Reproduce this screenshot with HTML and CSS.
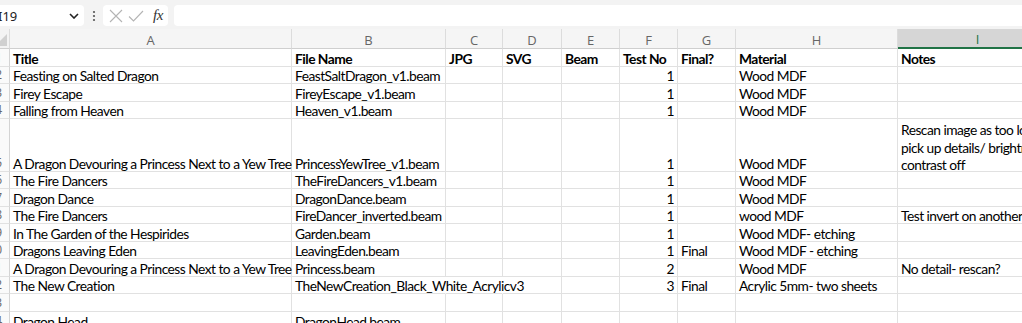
FILE: index.html
```html
<!DOCTYPE html>
<html>
<head>
<meta charset="utf-8">
<link rel="stylesheet" href="styles.css">
</head>
<body>
<div class="toolbar">
  <div class="namebox">
    <span class="ref">I19</span>
    <svg class="chev" width="10" height="6" viewBox="0 0 10 6"><path d="M1 1 L5 5 L9 1" fill="none" stroke="#222" stroke-width="1.6"/></svg>
  </div>
  <div class="dots">
    <svg width="4" height="12" viewBox="0 0 4 12"><circle cx="2" cy="2" r="1.1" fill="#555"/><circle cx="2" cy="6" r="1.1" fill="#555"/><circle cx="2" cy="10" r="1.1" fill="#555"/></svg>
  </div>
  <div class="fbtns">
    <svg width="14" height="14" viewBox="0 0 14 14"><path d="M1 1 L13 13 M13 1 L1 13" stroke="#b4b4b4" stroke-width="1.1" fill="none"/></svg>
    <svg width="16" height="14" viewBox="0 0 16 14"><path d="M1 7.5 L5.5 12 L15 2" stroke="#b4b4b4" stroke-width="1.1" fill="none"/></svg>
    <span class="fx">fx</span>
  </div>
  <div class="formula"></div>
</div>
<div class="sheet">
  <div class="grid">
    <div class="hd corner"><span class="tri"></span></div>
    <div class="hd">A</div><div class="hd">B</div><div class="hd">C</div><div class="hd">D</div><div class="hd">E</div><div class="hd">F</div><div class="hd">G</div><div class="hd">H</div><div class="hd sel">I</div>

    <div class="rn">1</div>
    <div class="c b">Title</div><div class="c b">File Name</div><div class="c b">JPG</div><div class="c b">SVG</div><div class="c b">Beam</div><div class="c b">Test No</div><div class="c b">Final?</div><div class="c b">Material</div><div class="c b">Notes</div>

    <div class="rn">2</div>
    <div class="c">Feasting on Salted Dragon</div><div class="c">FeastSaltDragon_v1.beam</div><div class="c"></div><div class="c"></div><div class="c"></div><div class="c n">1</div><div class="c"></div><div class="c">Wood MDF</div><div class="c"></div>

    <div class="rn">3</div>
    <div class="c">Firey Escape</div><div class="c">FireyEscape_v1.beam</div><div class="c"></div><div class="c"></div><div class="c"></div><div class="c n">1</div><div class="c"></div><div class="c">Wood MDF</div><div class="c"></div>

    <div class="rn">4</div>
    <div class="c">Falling from Heaven</div><div class="c">Heaven_v1.beam</div><div class="c"></div><div class="c"></div><div class="c"></div><div class="c n">1</div><div class="c"></div><div class="c">Wood MDF</div><div class="c"></div>

    <div class="rn">5</div>
    <div class="c">A Dragon Devouring a Princess Next to a Yew Tree</div><div class="c">PrincessYewTree_v1.beam</div><div class="c"></div><div class="c"></div><div class="c"></div><div class="c n">1</div><div class="c"></div><div class="c">Wood MDF</div><div class="c wrap">Rescan image as too low res to<br>pick up details/ brightness and<br>contrast off</div>

    <div class="rn">6</div>
    <div class="c">The Fire Dancers</div><div class="c">TheFireDancers_v1.beam</div><div class="c"></div><div class="c"></div><div class="c"></div><div class="c n">1</div><div class="c"></div><div class="c">Wood MDF</div><div class="c"></div>

    <div class="rn">7</div>
    <div class="c">Dragon Dance</div><div class="c">DragonDance.beam</div><div class="c"></div><div class="c"></div><div class="c"></div><div class="c n">1</div><div class="c"></div><div class="c">Wood MDF</div><div class="c"></div>

    <div class="rn">8</div>
    <div class="c">The Fire Dancers</div><div class="c">FireDancer_inverted.beam</div><div class="c"></div><div class="c"></div><div class="c"></div><div class="c n">1</div><div class="c"></div><div class="c">wood MDF</div><div class="c">Test invert on another image</div>

    <div class="rn">9</div>
    <div class="c">In The Garden of the Hespirides</div><div class="c">Garden.beam</div><div class="c"></div><div class="c"></div><div class="c"></div><div class="c n">1</div><div class="c"></div><div class="c">Wood MDF- etching</div><div class="c"></div>

    <div class="rn">10</div>
    <div class="c">Dragons Leaving Eden</div><div class="c">LeavingEden.beam</div><div class="c"></div><div class="c"></div><div class="c"></div><div class="c n">1</div><div class="c">Final</div><div class="c">Wood MDF - etching</div><div class="c"></div>

    <div class="rn">11</div>
    <div class="c">A Dragon Devouring a Princess Next to a Yew Tree</div><div class="c">Princess.beam</div><div class="c"></div><div class="c"></div><div class="c"></div><div class="c n">2</div><div class="c"></div><div class="c">Wood MDF</div><div class="c">No detail- rescan?</div>

    <div class="rn">12</div>
    <div class="c">The New Creation</div><div class="c nr">TheNewCreation_Black_White_Acrylicv3</div><div class="c nr"></div><div class="c"></div><div class="c"></div><div class="c n">3</div><div class="c">Final</div><div class="c">Acrylic 5mm- two sheets</div><div class="c"></div>

    <div class="rn">13</div>
    <div class="c"></div><div class="c"></div><div class="c"></div><div class="c"></div><div class="c"></div><div class="c"></div><div class="c"></div><div class="c"></div><div class="c"></div>

    <div class="rn">14</div>
    <div class="c">Dragon Head</div><div class="c">DragonHead.beam</div><div class="c"></div><div class="c"></div><div class="c"></div><div class="c"></div><div class="c"></div><div class="c"></div><div class="c"></div>
  </div>
</div>
</body>
</html>
```

FILE: styles.css
```css
html, body {
  margin: 0;
  padding: 0;
  background: #ffffff;
  overflow: hidden;
}

body {
  width: 1022px;
  height: 323px;
}

.toolbar {
  height: 29px;
  background: #f3f3f3;
  display: flex;
  align-items: flex-start;
  padding-top: 5px;
  box-sizing: border-box;
}

.namebox {
  width: 93px;
  height: 21px;
  margin-left: -9px;
  background: #ffffff;
  border-radius: 4px;
  display: flex;
  align-items: center;
  justify-content: space-between;
  padding: 0 5px 0 7px;
  box-sizing: border-box;
  font-family: "Noto Sans", "Open Sans", sans-serif;
  font-size: 13px;
  color: #222;
}

.chev {
  display: block;
}

.dots {
  width: 19px;
  height: 21px;
  display: flex;
  align-items: center;
  justify-content: center;
}

.dots svg {
  display: block;
}

.fbtns {
  width: 65px;
  height: 21px;
  background: #ffffff;
  border-radius: 4px;
  display: flex;
  align-items: center;
  gap: 5px;
  padding-left: 6px;
  box-sizing: border-box;
}

.fbtns svg {
  display: block;
}

.fx {
  font-family: "Liberation Serif", serif;
  font-style: italic;
  font-size: 15px;
  color: #333;
  margin-left: 4px;
  letter-spacing: -0.5px;
}

.formula {
  flex: 1;
  height: 21px;
  margin-left: 6px;
  background: #ffffff;
  border-radius: 4px 0 0 4px;
}

.sheet {
  width: 1022px;
  overflow: hidden;
}

.grid {
  display: grid;
  margin-left: -10px;
  grid-template-columns: 20px 282px 154px 57px 59px 58px 58px 58px 162px 160px;
  grid-template-rows: 20px 18px 17px 18px 17px 53px 17px 18px 17px 18px 17px 18px 17px 18px 18px;
  width: 1028px;
  font-family: "Lato", "Liberation Sans", sans-serif;
  font-size: 13.8px;
  letter-spacing: -0.53px;
  color: #000;
}

.hd {
  background: #f5f5f5;
  border-right: 1px solid #dcdcdc;
  border-bottom: 1px solid #cfcfcf;
  box-sizing: border-box;
  display: flex;
  align-items: center;
  justify-content: center;
  padding-top: 2px;
  font-family: "Open Sans", "Noto Sans", sans-serif;
  font-size: 13px;
  letter-spacing: 0;
  color: #666;
}

.hd.sel {
  background: #d6d6d6;
  border-bottom: 2px solid #217346;
  color: #217346;
}

.corner {
  position: relative;
  background: #f3f3f3;
}

.tri {
  position: absolute;
  right: 2px;
  bottom: 2px;
  width: 0;
  height: 0;
  border-left: 12px solid transparent;
  border-bottom: 12px solid #d0d0d0;
}

.rn {
  background: #fafafa;
  border-right: 1px solid #d4d4d4;
  border-bottom: 1px solid #e1e1e1;
  box-sizing: border-box;
  display: flex;
  align-items: flex-end;
  justify-content: flex-end;
  padding: 0 7px 0 0;
  font-family: "Open Sans", "Noto Sans", sans-serif;
  font-size: 12px;
  letter-spacing: 0;
  line-height: 16px;
  color: #666;
}

.c {
  border-right: 1px solid #e1e1e1;
  border-bottom: 1px solid #e1e1e1;
  box-sizing: border-box;
  display: flex;
  align-items: flex-end;
  padding: 0 3px 0 3px;
  white-space: nowrap;
  line-height: 14px;
  min-width: 0;
}

.c.b {
  font-weight: 700;
}

.c.n {
  justify-content: flex-end;
}

.c.nr {
  border-right-color: transparent;
}

.c.wrap {
  display: block;
  padding-top: 2px;
  line-height: 17.5px;
}
```
